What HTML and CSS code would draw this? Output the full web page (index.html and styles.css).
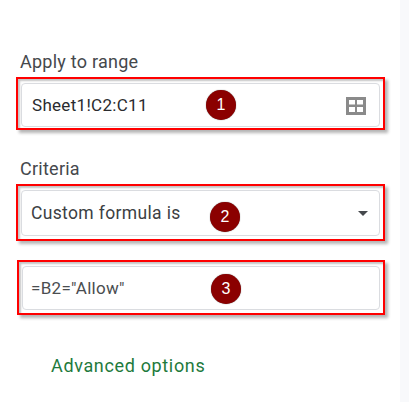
FILE: index.html
```html
<!DOCTYPE html>
<html lang="en">
<head>
<meta charset="utf-8">
<title>Conditional format rules</title>
<link rel="stylesheet" href="styles.css">
</head>
<body>
<main class="panel">
  <h2 class="label label-range">Apply to range</h2>
  <div class="mark mark-range">
    <div class="field field-range">
      <span class="value value-range">Sheet1!C2:C11</span>
      <svg class="grid-icon" width="20" height="18" viewBox="0 0 20 18" aria-hidden="true">
        <path fill="#8a8a8a" fill-rule="evenodd" d="M0 0h20v18H0z M3 3v4.5h6V3z M11 3v4.5h6V3z M3 10v5h6v-5z M11 10v5h6v-5z"/>
      </svg>
    </div>
    <span class="badge badge-1">1</span>
  </div>

  <h2 class="label label-criteria">Criteria</h2>
  <div class="mark mark-criteria">
    <div class="field field-criteria">
      <span class="value value-criteria">Custom formula is</span>
      <span class="caret"></span>
    </div>
    <span class="badge badge-2">2</span>
  </div>

  <div class="mark mark-formula">
    <div class="field field-formula">
      <span class="value value-formula">=B2="Allow"</span>
    </div>
    <span class="badge badge-3">3</span>
  </div>

  <a class="advanced" href="#">Advanced options</a>
</main>
</body>
</html>
```

FILE: styles.css
```css
html, body {
  margin: 0;
  padding: 0;
  height: 100%;
  background: #f8f9fb;
  overflow: hidden;
}

.panel {
  width: 400px;
  height: 402px;
  box-sizing: border-box;
  padding: 52px 0 0 16px;
  background: #fff;
  font-family: Roboto, "Liberation Sans", sans-serif;
}

.label {
  margin: 0;
  padding-left: 4px;
  font-size: 18px;
  font-weight: 400;
  line-height: 20px;
  letter-spacing: 0.25px;
  color: #45484c;
}

.label-range { margin-bottom: 5px; }
.label-criteria { margin-top: 29px; margin-bottom: 5px; }

.mark {
  position: relative;
  width: 369px;
  box-sizing: border-box;
  border: 2px solid #f00;
  padding: 4px 3px 3px 3px;
  box-shadow: 3px 3px 3px #b5b5b5, inset 2px 2px 2px #c4c4c4;
}

.mark-range { height: 53px; padding-bottom: 1px; }
.mark-criteria { height: 57px; }

.mark-formula {
  height: 55px;
  margin-top: 19px;
  margin-left: 1px;
  width: 368px;
}

.field {
  display: flex;
  align-items: center;
  justify-content: space-between;
  height: 100%;
  box-sizing: border-box;
  background: #fff;
  border: 1px solid #dadce0;
  border-radius: 4px;
}

.field-range { padding: 0 13px 0 10px; }
.field-criteria { padding: 0 11px 0 9px; }
.field-formula { padding: 0 9px 0 8px; }

.value {
  line-height: 20px;
  color: #3c4043;
}

.value-range { font-size: 17px; letter-spacing: 0.3px; color: #2a2b2e; }
.value-criteria { font-size: 17.5px; letter-spacing: 0.35px; }
.value-formula { font-size: 17px; letter-spacing: 0.3px; color: #4a4d50; }

.grid-icon { display: block; margin-top: 1px; }

.caret {
  width: 0;
  height: 0;
  border-left: 5px solid transparent;
  border-right: 5px solid transparent;
  border-top: 5px solid #45484c;
}

.badge {
  position: absolute;
  width: 30px;
  height: 30px;
  border-radius: 50%;
  background: #8b0000;
  color: #fff;
  font-family: "Liberation Sans", Arial, sans-serif;
  font-size: 16px;
  line-height: 30px;
  text-align: center;
  box-shadow: 0 0 1px #555;
}

.badge-1 { left: 188px; top: 11px; }
.badge-2 { left: 192px; top: 16px; }
.badge-3 { left: 192px; top: 12px; }

.advanced {
  display: block;
  margin: 40px 0 0 35px;
  font-size: 18px;
  line-height: 22px;
  letter-spacing: 0.65px;
  color: #1e7a3c;
  text-decoration: none;
}
```
